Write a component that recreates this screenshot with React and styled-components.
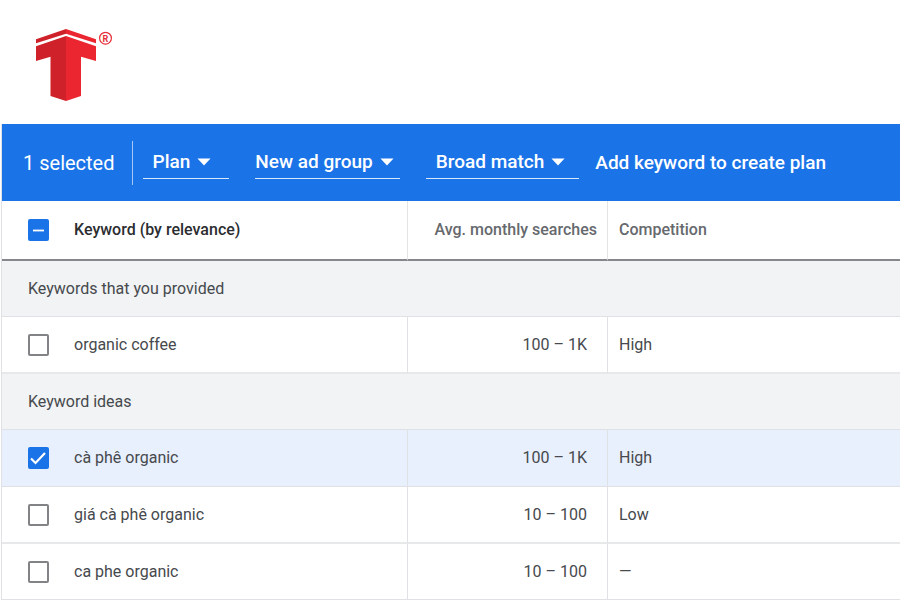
import React, { useEffect, useRef, useState } from "react";
import styled, { createGlobalStyle } from "styled-components";

const GlobalStyle = createGlobalStyle`
  *, *::before, *::after { box-sizing: border-box; }
  body {
    margin: 0;
    background: #fff;
    color: #46494d;
    font-family: Roboto, "Noto Sans", sans-serif;
    font-size: 16px;
    line-height: 20px;
  }
`;

const Brand = styled.header`
  display: flex;
  height: 124px;
  padding: 28px 35px;
`;

const Planner = styled.main`
  margin-left: 1px;
  border-left: 1px solid #dfe1e5;
`;

const Toolbar = styled.div`
  display: flex;
  align-items: center;
  height: 77px;
  padding-left: 21px;
  background: #1b73e8;
  color: #fff;
  white-space: nowrap;
`;

const Count = styled.span`
  padding-right: 17px;
  border-right: 1px solid #a4c7f5;
  font-size: 20px;
  line-height: 44px;
`;

const Picker = styled.div`
  display: inline-grid;
  align-items: center;
  margin-left: ${(p) => p.$gap}px;
  padding: 0 ${(p) => p.$end}px 0 ${(p) => p.$start}px;
  border-bottom: 1px solid #dbe8fb;
`;

const PickerSelect = styled.select`
  grid-area: 1 / 1;
  appearance: none;
  field-sizing: content;
  height: 32px;
  margin: 0;
  padding: 0 21px 0 0;
  border: 0;
  background: transparent;
  color: inherit;
  font: 500 19px/24px Roboto, sans-serif;
  cursor: pointer;

  option { color: #202124; }
`;

const Arrow = styled.svg`
  grid-area: 1 / 1;
  justify-self: end;
  pointer-events: none;
`;

const ToolbarButton = styled.button`
  margin-left: 16px;
  padding: 0;
  border: 0;
  background: transparent;
  color: inherit;
  font: 500 19px/24px Roboto, sans-serif;
  cursor: pointer;
`;

const Table = styled.table`
  width: 100%;
  border-collapse: separate;
  border-spacing: 0;
  table-layout: fixed;

  tbody:last-child tr:last-child td { height: 56px; }
`;

const KeywordCol = styled.col`
  width: 406px;
`;

const SearchesCol = styled.col`
  width: 200px;
`;

const HeadCell = styled.th`
  height: 60px;
  padding: 0 10px 0 11px;
  border-bottom: 2px solid #85878a;
  border-right: ${(p) => (p.$last ? "0" : "1px solid #e3e4e6")};
  color: ${(p) => (p.$strong ? "#2b2d30" : "#66696d")};
  font-weight: 500;
  text-align: ${(p) => (p.$right ? "right" : "left")};
  white-space: nowrap;
`;

const KeywordHead = styled(HeadCell)`
  padding-left: 26px;
`;

const GroupCell = styled.th`
  height: 56px;
  padding: 0 26px;
  border-bottom: 1px solid #dfe1e4;
  background: #f1f3f4;
  font-weight: 400;
  text-align: left;
`;

const Row = styled.tr`
  background: ${(p) => (p.$selected ? "#e8effd" : "#fff")};
`;

const Cell = styled.td`
  height: 57px;
  padding: 0 20px 0 11px;
  border-bottom: ${(p) => (p.$thick ? "2px solid #e6e8ea" : "1px solid #dfe1e4")};
  border-right: ${(p) => (p.$last ? "0" : "1px solid #dfe1e4")};
  text-align: ${(p) => (p.$right ? "right" : "left")};
  white-space: nowrap;
`;

const KeywordCell = styled(Cell)`
  padding-left: 26px;
`;

const CheckLabel = styled.label`
  display: flex;
  align-items: center;
  gap: 25px;
`;

const BoxFrame = styled.span`
  display: grid;
  width: 21px;
  height: 22px;
`;

const Box = styled.input`
  grid-area: 1 / 1;
  appearance: none;
  width: 21px;
  height: 22px;
  margin: 0;
  border: 2px solid #818386;
  border-radius: 2px;
  background: #fff;

  &:checked, &:indeterminate {
    border-color: #1b73e8;
    background: #1b73e8;
  }
`;

const Mark = styled.svg`
  grid-area: 1 / 1;
  pointer-events: none;
`;

function Logo() {
  return (
    <svg width="80" height="74" viewBox="0 0 80 74" role="img" aria-label="T logo">
      <path fill="#cf2129" d="M1 11.3 31 1v4.700L1 15.300zM1 18.300 31 8v65l-15.500-5V28.700L1 33z" />
      <path fill="#ec2630" d="M61 11.300 31 1v4.700L61 15.300zM61 18.300 31 8v65l15-5V28.700L61 33z" />
      <circle cx="70.500" cy="10.200" r="5.900" fill="none" stroke="#e5303a" strokeWidth="1.200" />
      <text x="70.500" y="13.500" textAnchor="middle" fill="#e5303a" fontFamily="Roboto, sans-serif" fontSize="9" fontWeight="700">R</text>
    </svg>
  );
}

function Checkbox({ checked, mixed, onChange }) {
  const ref = useRef(null);
  useEffect(() => {
    ref.current.indeterminate = mixed;
  }, [mixed]);
  return (
    <BoxFrame>
      <Box ref={ref} type="checkbox" checked={checked} onChange={onChange} />
      {(checked || mixed) && (
        <Mark width="21" height="22" viewBox="0 0 21 22" aria-hidden="true">
          <path d={mixed ? "M5 11.500h11" : "M3 11.500l4.500 4.500 9.500-10"} fill="none" stroke="#fff" strokeWidth={mixed ? 1.8 : 2.2} />
        </Mark>
      )}
    </BoxFrame>
  );
}

function Dropdown({ label, options, gap, start, end }) {
  return (
    <Picker $gap={gap} $start={start} $end={end}>
      <PickerSelect aria-label={label}>
        {options.map((o) => <option key={o}>{o}</option>)}
      </PickerSelect>
      <Arrow width="14" height="8" viewBox="0 0 14 8" aria-hidden="true">
        <path d="M.5.5h13L7 7.500z" fill="#fff" />
      </Arrow>
    </Picker>
  );
}

const groups = [
  {
    title: "Keywords that you provided",
    rows: [{ keyword: "organic coffee", searches: "100 – 1K", competition: "High", thick: true }],
  },
  {
    title: "Keyword ideas",
    rows: [
      { keyword: "cà phê organic", searches: "100 – 1K", competition: "High" },
      { keyword: "giá cà phê organic", searches: "10 – 100", competition: "Low", thick: true },
      { keyword: "ca phe organic", searches: "10 – 100", competition: "—" },
    ],
  },
];

const allKeywords = groups.flatMap((g) => g.rows.map((r) => r.keyword));

export default function App() {
  const [selected, setSelected] = useState(["cà phê organic"]);
  const all = selected.length === allKeywords.length;
  const toggle = (k) =>
    setSelected((s) => (s.includes(k) ? s.filter((x) => x !== k) : [...s, k]));

  return (
    <>
      <GlobalStyle />
      <Brand><Logo /></Brand>
      <Planner>
        <Toolbar>
          <Count>{selected.length} selected</Count>
          <Dropdown label="Destination" options={["Plan"]} gap={10} start={10} end={18} />
          <Dropdown label="Ad group" options={["New ad group"]} gap={26} start={0} end={6} />
          <Dropdown label="Match type" options={["Broad match"]} gap={26} start={10} end={14} />
          <ToolbarButton type="button">Add keyword to create plan</ToolbarButton>
        </Toolbar>
        <Table>
          <colgroup>
            <KeywordCol />
            <SearchesCol />
            <col />
          </colgroup>
          <thead>
            <tr>
              <KeywordHead $strong>
                <CheckLabel>
                  <Checkbox
                    checked={all}
                    mixed={selected.length > 0 && !all}
                    onChange={() => setSelected(all ? [] : allKeywords)}
                  />
                  Keyword (by relevance)
                </CheckLabel>
              </KeywordHead>
              <HeadCell $right>Avg. monthly searches</HeadCell>
              <HeadCell $last>Competition</HeadCell>
            </tr>
          </thead>
          {groups.map((g) => (
            <tbody key={g.title}>
              <tr><GroupCell colSpan={3} scope="rowgroup">{g.title}</GroupCell></tr>
              {g.rows.map((r) => {
                const on = selected.includes(r.keyword);
                return (
                  <Row key={r.keyword} $selected={on}>
                    <KeywordCell $thick={r.thick}>
                      <CheckLabel>
                        <Checkbox checked={on} mixed={false} onChange={() => toggle(r.keyword)} />
                        {r.keyword}
                      </CheckLabel>
                    </KeywordCell>
                    <Cell $right $thick={r.thick}>{r.searches}</Cell>
                    <Cell $last $thick={r.thick}>{r.competition}</Cell>
                  </Row>
                );
              })}
            </tbody>
          ))}
        </Table>
      </Planner>
    </>
  );
}
